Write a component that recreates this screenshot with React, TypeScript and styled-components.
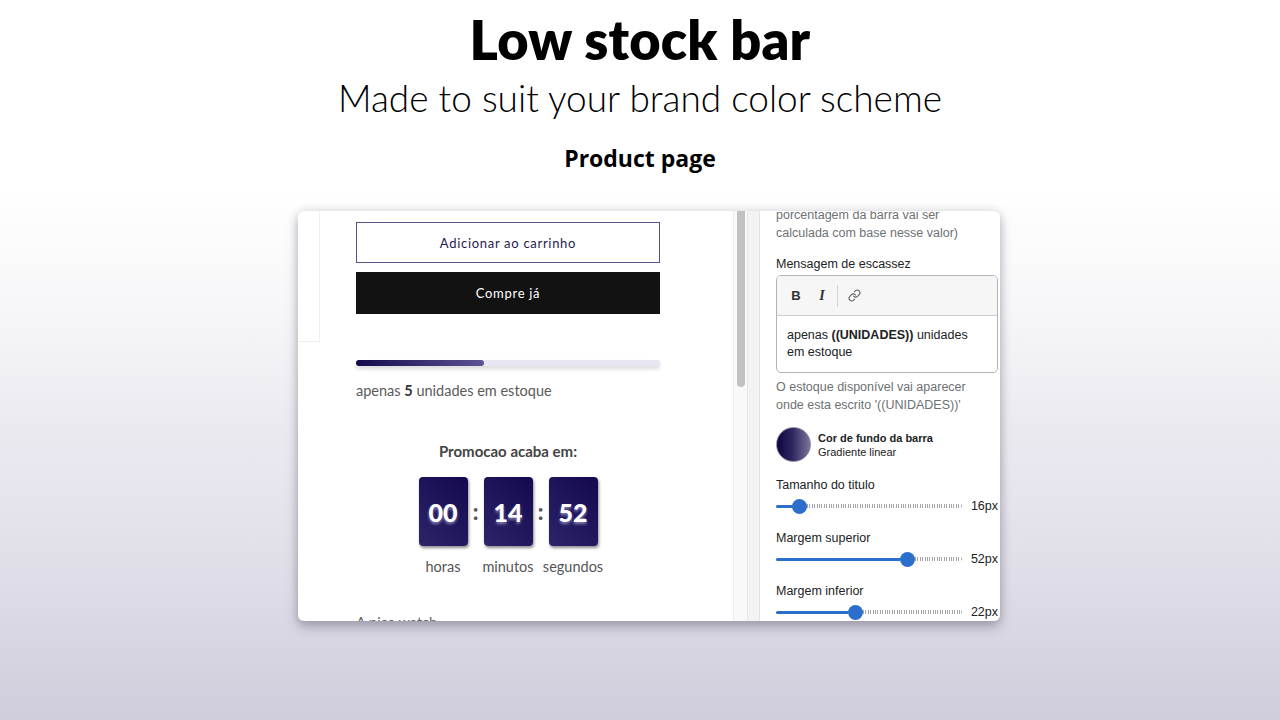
import React from "react";
import styled, { createGlobalStyle } from "styled-components";
import { Link } from "lucide-react";

const GlobalStyle = createGlobalStyle`
  html, body { margin: 0; padding: 0; }
  body {
    width: 1280px;
    height: 720px;
    overflow: hidden;
    background: linear-gradient(to bottom, #ffffff 0%, #ffffff 26%, #f7f7f9 42%, #ebe9f0 60%, #dfdde7 80%, #d0cddc 100%);
    font-family: "Lato", "Liberation Sans", sans-serif;
  }
`;

const Page = styled.div`
  height: 720px;
  display: flex;
  flex-direction: column;
  align-items: center;
  padding-top: 10px;
  box-sizing: border-box;
`;

const Title = styled.h1`
  margin: 0;
  font-family: "Lato", sans-serif;
  font-weight: 800;
  font-size: 54px;
  line-height: 60px;
  color: #000;
  letter-spacing: 0.2px;
`;

const Subtitle = styled.h2`
  margin: 6px 0 0;
  font-family: "Lato", sans-serif;
  font-weight: 300;
  font-size: 37px;
  line-height: 44px;
  color: #000;
`;

const Section = styled.h3`
  margin: 23px 0 0;
  font-family: "Open Sans", sans-serif;
  font-weight: 700;
  font-size: 23px;
  line-height: 30px;
  color: #000;
`;

const Card = styled.div`
  margin-top: 38px;
  margin-left: 18px;
  width: 702px;
  height: 410px;
  display: grid;
  grid-template-columns: 435px 14px 13px 240px;
  background: #fff;
  border-radius: 6px;
  overflow: hidden;
  box-shadow: 0 6px 12px rgba(70, 64, 92, 0.35), 0 0 10px rgba(0, 0, 0, 0.12);
`;

const Preview = styled.div`
  display: flex;
  align-items: flex-start;
  font-family: "Lato", sans-serif;
`;

const GalleryStub = styled.div`
  width: 22px;
  height: 131px;
  box-sizing: border-box;
  border-right: 1px solid #eeeeee;
  border-bottom: 1px solid #eeeeee;
`;

const ProductColumn = styled.div`
  width: 304px;
  margin-left: 36px;
  padding-top: 11px;
  display: flex;
  flex-direction: column;
`;

const OutlineButton = styled.div`
  height: 41px;
  box-sizing: border-box;
  border: 1px solid #5b5189;
  display: flex;
  align-items: center;
  justify-content: center;
  color: #1f1a4d;
  font-size: 13px;
  letter-spacing: 0.7px;
`;

const SolidButton = styled.div`
  margin-top: 9px;
  height: 42px;
  background: #121212;
  display: flex;
  align-items: center;
  justify-content: center;
  color: #fff;
  font-size: 13px;
  letter-spacing: 0.7px;
`;

const StockTrack = styled.div`
  margin-top: 46px;
  height: 6px;
  border-radius: 3px;
  background: #e8e6f0;
  box-shadow: 0 3px 4px rgba(0, 0, 0, 0.15);
  display: flex;
`;

const StockFill = styled.div<{ $pct: number }>`
  width: ${(p) => p.$pct}%;
  border-radius: 3px;
  background: linear-gradient(to right, #130a4e, #5e5296);
`;

const StockText = styled.div`
  margin-top: 15px;
  font-size: 14.5px;
  line-height: 20px;
  color: #5a5a5a;
  b { color: #333; font-weight: 700; }
`;

const PromoTitle = styled.div`
  margin-top: 40px;
  text-align: center;
  font-size: 15px;
  line-height: 20px;
  font-weight: 700;
  color: #444;
`;

const Countdown = styled.div`
  margin-top: 16px;
  display: flex;
  justify-content: center;
  align-items: flex-start;
`;

const Unit = styled.div`
  width: 49px;
  display: flex;
  flex-direction: column;
  align-items: center;
`;

const DigitBox = styled.div`
  width: 49px;
  height: 69px;
  border-radius: 4px;
  background: linear-gradient(225deg, #14094f 0%, #1f165c 50%, #2d2568 100%);
  box-shadow: 1px 2px 3px rgba(0, 0, 0, 0.45);
  display: flex;
  align-items: center;
  justify-content: center;
  color: #fff;
  font-size: 25px;
  font-weight: 900;
  text-shadow: 0 2px 3px rgba(220, 220, 255, 0.55);
`;

const UnitLabel = styled.div`
  margin-top: 11px;
  font-size: 14.5px;
  line-height: 20px;
  color: #555;
  white-space: nowrap;
`;

const Colon = styled.div`
  width: 16px;
  height: 69px;
  display: flex;
  align-items: center;
  justify-content: center;
  font-size: 22px;
  font-weight: 900;
  color: #555;
`;

const Teaser = styled.div`
  margin-top: 36px;
  font-size: 14.5px;
  line-height: 20px;
  color: #666;
`;

const ScrollTrack = styled.div`
  border-left: 1px solid #ececec;
  background: #f9f9f9;
  display: flex;
  justify-content: center;
`;

const ScrollThumb = styled.div`
  margin-top: -6px;
  width: 8px;
  height: 182px;
  border-radius: 4px;
  background: #c1c1c1;
`;

const Gutter = styled.div`
  background: #f3f3f5;
  border-left: 1px solid #e6e6e8;
  border-right: 1px solid #e3e3e6;
`;

const Panel = styled.div`
  padding: 0 2px 0 16px;
  font-family: "Liberation Sans", Arial, sans-serif;
  font-size: 12.5px;
  color: #202223;
  display: flex;
  flex-direction: column;
`;

const HelpText = styled.div<{ $mt: number }>`
  margin-top: ${(p) => p.$mt}px;
  color: #6d7175;
  line-height: 18px;
`;

const FieldLabel = styled.div<{ $mt?: number }>`
  margin-top: ${(p) => p.$mt ?? 0}px;
  line-height: 18px;
  color: #202223;
`;

const Editor = styled.div`
  margin-top: 2px;
  border: 1px solid #aeb4b9;
  border-radius: 5px;
  overflow: hidden;
`;

const Toolbar = styled.div`
  height: 39px;
  background: #f6f6f7;
  border-bottom: 1px solid #c9cccf;
  display: flex;
  align-items: center;
  padding-left: 6px;
`;

const ToolButton = styled.div<{ $italic?: boolean }>`
  width: 26px;
  height: 26px;
  display: flex;
  align-items: center;
  justify-content: center;
  color: #303234;
  font-family: ${(p) => (p.$italic ? '"Liberation Serif", serif' : '"Liberation Sans", sans-serif')};
  font-style: ${(p) => (p.$italic ? "italic" : "normal")};
  font-weight: 700;
  font-size: ${(p) => (p.$italic ? "14px" : "13px")};
`;

const ToolSeparator = styled.div`
  width: 1px;
  height: 22px;
  margin: 0 3px 0 2px;
  background: #d2d5d8;
`;

const EditorBody = styled.div`
  padding: 11px 10px 11px;
  line-height: 17px;
  color: #202223;
  b { font-weight: 700; }
`;

const SwatchRow = styled.div`
  margin-top: 13px;
  display: flex;
  align-items: center;
  gap: 7px;
`;

const Swatch = styled.div`
  width: 35px;
  height: 35px;
  border-radius: 50%;
  box-sizing: border-box;
  border: 1px solid #8f8aa3;
  background: linear-gradient(to right, #0c063d 0%, #2d2560 45%, #7a7399 100%);
`;

const SwatchText = styled.div`
  display: flex;
  flex-direction: column;
  font-size: 11px;
  line-height: 14px;
  color: #202223;
  strong { font-weight: 700; }
`;

const Field = styled.div<{ $mt: number }>`
  margin-top: ${(p) => p.$mt}px;
  display: flex;
  flex-direction: column;
`;

const SliderRow = styled.div`
  margin-top: 4px;
  display: flex;
  align-items: center;
  height: 16px;
`;

const SliderTrack = styled.div`
  width: 186px;
  display: flex;
  align-items: center;
`;

const SliderFill = styled.div<{ $w: number }>`
  width: ${(p) => p.$w}px;
  height: 3px;
  border-radius: 2px 0 0 2px;
  background: #2c6ecb;
`;

const SliderThumb = styled.div`
  width: 15px;
  height: 15px;
  border-radius: 50%;
  background: #2c6ecb;
  flex-shrink: 0;
`;

const SliderRest = styled.div`
  flex: 1;
  height: 4px;
  background: repeating-linear-gradient(to right, #a3a6a9 0 1px, transparent 1px 2.4px);
  border-radius: 0 2px 2px 0;
`;

const SliderValue = styled.div`
  margin-left: auto;
  color: #202223;
  line-height: 16px;
`;

const Slider = ({ label, value, fill, mt }: { label: string; value: string; fill: number; mt: number }) => (
  <Field $mt={mt}>
    <FieldLabel>{label}</FieldLabel>
    <SliderRow>
      <SliderTrack>
        <SliderFill $w={fill} />
        <SliderThumb />
        <SliderRest />
      </SliderTrack>
      <SliderValue>{value}</SliderValue>
    </SliderRow>
  </Field>
);

const units = [
  { v: "00", l: "horas" },
  { v: "14", l: "minutos" },
  { v: "52", l: "segundos" },
];

export default function App() {
  return (
    <>
      <GlobalStyle />
      <Page>
        <Title>Low stock bar</Title>
        <Subtitle>Made to suit your brand color scheme</Subtitle>
        <Section>Product page</Section>
        <Card>
          <Preview>
            <GalleryStub />
            <ProductColumn>
              <OutlineButton>Adicionar ao carrinho</OutlineButton>
              <SolidButton>Compre já</SolidButton>
              <StockTrack>
                <StockFill $pct={42} />
              </StockTrack>
              <StockText>
                apenas <b>5</b> unidades em estoque
              </StockText>
              <PromoTitle>Promocao acaba em:</PromoTitle>
              <Countdown>
                {units.map((u, i) => (
                  <React.Fragment key={u.l}>
                    {i > 0 && <Colon>:</Colon>}
                    <Unit>
                      <DigitBox>{u.v}</DigitBox>
                      <UnitLabel>{u.l}</UnitLabel>
                    </Unit>
                  </React.Fragment>
                ))}
              </Countdown>
              <Teaser>A nice watch</Teaser>
            </ProductColumn>
          </Preview>
          <ScrollTrack>
            <ScrollThumb />
          </ScrollTrack>
          <Gutter />
          <Panel>
            <HelpText $mt={-5}>
              porcentagem da barra vai ser
              <br />
              calculada com base nesse valor)
            </HelpText>
            <FieldLabel $mt={13}>Mensagem de escassez</FieldLabel>
            <Editor>
              <Toolbar>
                <ToolButton>B</ToolButton>
                <ToolButton $italic>I</ToolButton>
                <ToolSeparator />
                <ToolButton>
                  <Link size={13} strokeWidth={2} color="#5c5f62" />
                </ToolButton>
              </Toolbar>
              <EditorBody>
                apenas <b>((UNIDADES))</b> unidades
                <br />
                em estoque
              </EditorBody>
            </Editor>
            <HelpText $mt={5}>
              O estoque disponível vai aparecer
              <br />
              onde esta escrito '((UNIDADES))'
            </HelpText>
            <SwatchRow>
              <Swatch />
              <SwatchText>
                <strong>Cor de fundo da barra</strong>
                <span>Gradiente linear</span>
              </SwatchText>
            </SwatchRow>
            <Slider label="Tamanho do titulo" value="16px" fill={16} mt={14} />
            <Slider label="Margem superior" value="52px" fill={124} mt={15} />
            <Slider label="Margem inferior" value="22px" fill={72} mt={15} />
          </Panel>
        </Card>
      </Page>
    </>
  );
}
